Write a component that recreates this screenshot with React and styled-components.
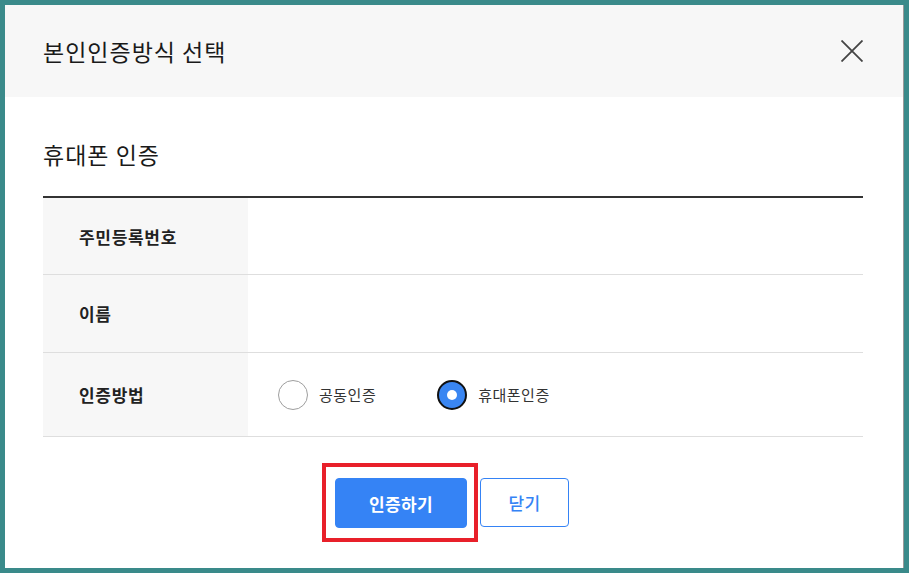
import React, { useState } from "react";
import styled, { createGlobalStyle } from "styled-components";

const Global = createGlobalStyle`
  html, body { margin: 0; padding: 0; }
  body {
    background: #3a8a8a;
    font-family: "Noto Sans CJK KR", "Noto Sans", sans-serif;
    color: #222;
  }
  * { box-sizing: border-box; }
`;

const Frame = styled.div`
  width: 909px;
  height: 573px;
  padding: 5px;
  display: flex;
`;

const Modal = styled.div`
  width: 899px;
  height: 563px;
  background: #fff;
  border-right: 1px solid #9a9a9a;
  display: flex;
  flex-direction: column;
`;

const Header = styled.div`
  height: 92px;
  background: #f7f7f7;
  display: flex;
  align-items: center;
  justify-content: space-between;
  padding: 0 39px 0 38px;
`;

const Title = styled.h1`
  margin: 0;
  font-size: 23px;
  font-weight: 400;
  color: #1a1a1a;
  line-height: 30px;
  letter-spacing: 1px;
`;

const CloseBtn = styled.button`
  width: 24px;
  height: 24px;
  padding: 0;
  border: 0;
  background: transparent;
  display: flex;
  align-items: center;
  justify-content: center;
  cursor: pointer;
`;

const Body = styled.div`
  padding: 0 40px 0 38px;
  display: flex;
  flex-direction: column;
`;

const SectionTitle = styled.h2`
  margin: 42px 0 27px 0;
  font-size: 23px;
  font-weight: 400;
  line-height: 30px;
  letter-spacing: 1px;
  color: #1a1a1a;
`;

const Table = styled.div`
  border-top: 2px solid #333;
  display: grid;
  grid-template-columns: 205px 1fr;
`;

const LabelCell = styled.div`
  height: ${(p) => p.$h}px;
  background: #f7f7f7;
  border-bottom: 1px solid #dedede;
  display: flex;
  align-items: center;
  padding-left: 36px;
  font-size: 17px;
  font-weight: 700;
  letter-spacing: 0.7px;
  color: #222;
`;

const ValueCell = styled.div`
  height: ${(p) => p.$h}px;
  border-bottom: 1px solid #dedede;
  display: flex;
  align-items: center;
  padding-left: 30px;
  gap: 61px;
`;

const RadioLabel = styled.label`
  display: flex;
  align-items: center;
  gap: 11px;
  font-size: 15px;
  letter-spacing: 0.5px;
  color: #333;
  cursor: pointer;
`;

const RadioCircle = styled.span`
  width: 30px;
  height: 30px;
  border-radius: 50%;
  display: flex;
  align-items: center;
  justify-content: center;
  background: ${(p) => (p.$checked ? "#3a86f2" : "#fff")};
  border: ${(p) => (p.$checked ? "2px solid #111" : "1px solid #9e9e9e")};
  &::after {
    content: "";
    width: 10px;
    height: 10px;
    border-radius: 50%;
    background: #fff;
    display: ${(p) => (p.$checked ? "block" : "none")};
  }
`;

const HiddenInput = styled.input`
  display: none;
`;

const Buttons = styled.div`
  margin-top: 41px;
  display: flex;
  justify-content: center;
  align-items: flex-start;
  gap: 13px;
  padding-right: 2px;
`;

const Highlight = styled.span`
  position: relative;
  display: flex;
`;

const HighlightBox = styled.span`
  position: absolute;
  left: -13px;
  top: -15px;
  width: 156px;
  height: 79px;
  border: 4px solid #e8202a;
  pointer-events: none;
`;

const Button = styled.button`
  height: ${(p) => (p.$primary ? 50 : 49)}px;
  width: ${(p) => (p.$primary ? 132 : 89)}px;
  border-radius: 4px;
  font-family: inherit;
  font-size: 17px;
  letter-spacing: 0.3px;
  font-weight: ${(p) => (p.$primary ? 700 : 500)};
  background: ${(p) => (p.$primary ? "#3583f5" : "#fff")};
  color: ${(p) => (p.$primary ? "#fff" : "#3583f5")};
  border: 1px solid #3583f5;
  cursor: pointer;
`;

const rows = [
  { label: "주민등록번호", h: 77 },
  { label: "이름", h: 78 },
];

export default function App() {
  const [method, setMethod] = useState("phone");
  return (
    <>
      <Global />
      <Frame>
        <Modal>
          <Header>
            <Title>본인인증방식 선택</Title>
            <CloseBtn aria-label="닫기">
              <svg width="22" height="22" viewBox="0 0 22 22">
                <path d="M0.5 0.5 L21.5 21.5 M21.5 0.5 L0.5 21.5" stroke="#444" strokeWidth="1.8" fill="none" />
              </svg>
            </CloseBtn>
          </Header>
          <Body>
            <SectionTitle>휴대폰 인증</SectionTitle>
            <Table>
              {rows.map((r) => (
                <React.Fragment key={r.label}>
                  <LabelCell $h={r.h}>{r.label}</LabelCell>
                  <ValueCell $h={r.h} />
                </React.Fragment>
              ))}
              <LabelCell $h={84}>인증방법</LabelCell>
              <ValueCell $h={84}>
                <RadioLabel onClick={() => setMethod("cert")}>
                  <HiddenInput type="radio" name="m" readOnly checked={method === "cert"} />
                  <RadioCircle $checked={method === "cert"} />
                  공동인증
                </RadioLabel>
                <RadioLabel onClick={() => setMethod("phone")}>
                  <HiddenInput type="radio" name="m" readOnly checked={method === "phone"} />
                  <RadioCircle $checked={method === "phone"} />
                  휴대폰인증
                </RadioLabel>
              </ValueCell>
            </Table>
            <Buttons>
              <Highlight>
                <Button $primary>인증하기</Button>
                <HighlightBox />
              </Highlight>
              <Button>닫기</Button>
            </Buttons>
          </Body>
        </Modal>
      </Frame>
    </>
  );
}
